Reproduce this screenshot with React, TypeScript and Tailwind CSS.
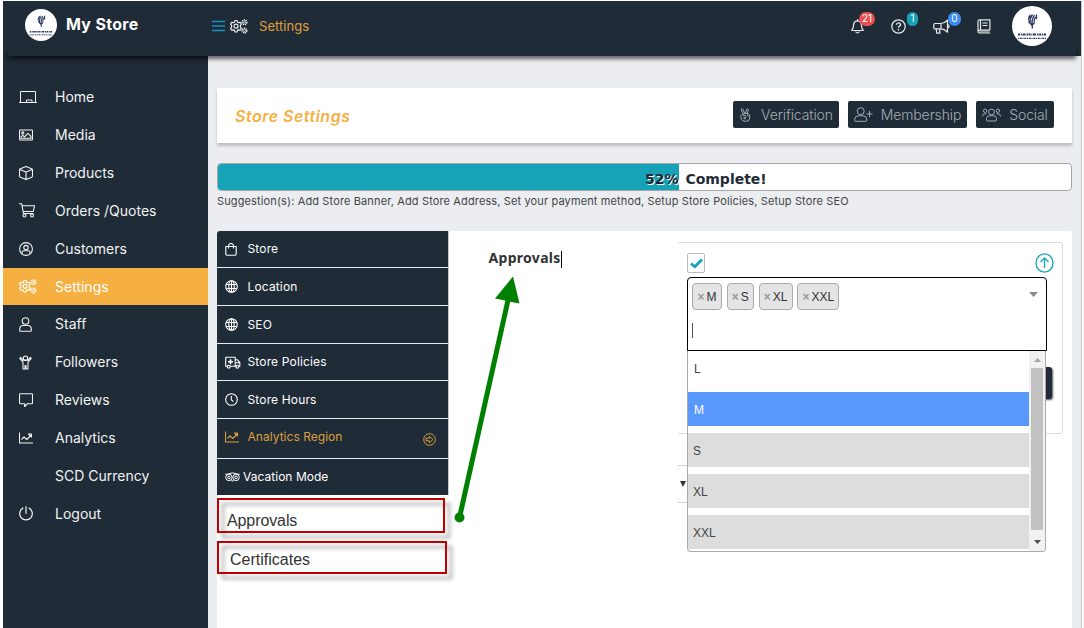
import type { ReactNode } from 'react';

type GlyphProps = { w?: number; h?: number; box?: string; stroke?: number; className?: string; children: ReactNode };

function Glyph({ w = 14, h = 14, box, stroke = 1, className, children }: GlyphProps) {
  return (
    <svg
      width={w}
      height={h}
      viewBox={box ?? `0 0 ${w} ${h}`}
      fill="none"
      stroke="currentColor"
      strokeWidth={stroke}
      strokeLinejoin="round"
      className={`shrink-0 ${className ?? ''}`}
    >
      {children}
    </svg>
  );
}

const Home = () => (
  <Glyph w={18} h={14}>
    <path d="M1.500 12.500V1.500h15v11M0 12.500h18M7.500 12.500v-2.500h5.500v2.500" />
  </Glyph>
);

const Media = () => (
  <Glyph w={14} h={12} stroke={1.100}>
    <rect x="0.5" y="1" width="13" height="10" rx="0.6" />
    <circle cx="3.8" cy="4" r="1.1" />
    <path d="M2 9.2V7.8l1.7-1.5 1.8 1.5L8.8 4.3 12 7.3v1.9z" />
  </Glyph>
);

const Products = () => (
  <Glyph stroke={1.100}>
    <path d="M7 .6l5.6 2.2q.9.4.9 1.2v6q0 .8-.9 1.2L7 13.4l-5.6-2.2Q.5 10.800.5 10V4q0-.8.9-1.2zM.8 3.500L7 6l6.200-2.500M7 6v7" />
  </Glyph>
);

const Cart = () => (
  <Glyph w={16} h={15} stroke={1.100}>
    <path d="M0 .8h2.700l1.800 9.700h10M3.200 2.700h12.300l-1.200 5.800H4.200" />
    <circle cx="5.500" cy="12.500" r="1.500" />
    <circle cx="13" cy="12.500" r="1.500" />
  </Glyph>
);

const Customers = () => (
  <Glyph stroke={1.100}>
    <circle cx="7" cy="7" r="6.400" />
    <circle cx="7" cy="5.600" r="2.200" />
    <path d="M3 11.800V10.500q0-1.700 1.700-1.700h4.600q1.700 0 1.700 1.700v1.300" />
  </Glyph>
);

function Cogs({ className }: { className?: string }) {
  return (
    <Glyph w={18} h={15} stroke={1.200} className={className}>
      <path d="M5 1.500h2l.5 1.600 1.200.6 1.700-.4 1 1.800-1 1.300v1.700l1 1.300-1 1.800-1.700-.4-1.200.6-.5 1.600H5l-.5-1.600-1.200-.6-1.700.4-1-1.800 1-1.300V6.400l-1-1.300 1-1.800 1.700.4 1.200-.6z" />
      <circle cx="6" cy="7.200" r="2" />
      <circle cx="14.500" cy="3.300" r="2.300" strokeDasharray="1.200 .6" strokeWidth="1.500" />
      <circle cx="14.500" cy="3.300" r="1" strokeWidth=".8" />
      <circle cx="14.500" cy="11.600" r="2.300" strokeDasharray="1.200 .6" strokeWidth="1.500" />
      <circle cx="14.500" cy="11.600" r="1" strokeWidth=".8" />
    </Glyph>
  );
}

const Staff = () => (
  <Glyph w={13} h={15} stroke={1.100}>
    <circle cx="6.500" cy="4" r="3.300" />
    <path d="M4.300 8.500h4.400q3.600 0 3.600 3.500v1.400q0 .8-.8.8h-10q-.8 0-.8-.8V12q0-3.500 3.600-3.500z" />
  </Glyph>
);

const Followers = () => (
  <Glyph w={13} h={15} stroke={1.100}>
    <circle cx="6.500" cy="3.200" r="2.200" />
    <path d="M4 5.300L1.800 2.400l-1.100 1L4 7.200V14h2v-3.500h1V14h2V7.200l3.300-3.800-1.100-1L9 5.300z" />
  </Glyph>
);

const Reviews = () => (
  <Glyph w={14} h={15} stroke={1.100}>
    <path d="M1.300.8h11.400q.8 0 .8.800v8.300q0 .8-.8.800H8.500l-2.800 2.800v-2.800H1.300q-.8 0-.8-.8V1.600q0-.8.8-.8z" />
  </Glyph>
);

const Chart = () => (
  <Glyph w={14} h={12} stroke={1.100}>
    <path d="M.5.500v10.500H14M2.500 7.500l2.500-2.500 2.800 2.500 4-4" />
    <path d="M9.500 2h3v3z" />
  </Glyph>
);

const Power = () => (
  <Glyph w={14} h={15} stroke={1.200}>
    <path d="M7 .3v7.500M4.300 1.900a6.300 6.300 0 1 0 5.400 0" />
  </Glyph>
);

const Bag = () => (
  <Glyph w={12} h={13} stroke={1.100}>
    <path d="M.8 3.500h10.400v7.300q0 1.500-1.500 1.500H2.300q-1.500 0-1.500-1.500zM3.500 5.500V3a2.500 2.500 0 0 1 5 0v2.500" />
  </Glyph>
);

const Globe = () => (
  <Glyph w={13} h={13} stroke={1.100}>
    <circle cx="6.500" cy="6.500" r="5.800" />
    <ellipse cx="6.500" cy="6.500" rx="2.700" ry="5.800" />
    <path d="M1.200 4.500h10.600M1.200 8.500h10.600M6.500.7v11.600" />
  </Glyph>
);

const Truck = () => (
  <Glyph w={16} h={13} stroke={1.100}>
    <path d="M2 10.300H.7V1.200h9.500v9.100H5M10.200 3.800h2.300l2.300 2.800v3.700h-1M11.500 10.300H5M11 6.800h3.500" />
    <path d="M5.500 3.200v5M3 5.700h5" strokeWidth="1.600" />
    <circle cx="3.700" cy="10.700" r="1.400" />
    <circle cx="12.300" cy="10.700" r="1.400" />
  </Glyph>
);

const Clock = () => (
  <Glyph w={13} h={13} stroke={1.100}>
    <circle cx="6.500" cy="6.500" r="5.800" />
    <path d="M6.300 3v3.800l2 1.700" />
  </Glyph>
);

const Owl = () => (
  <Glyph w={15} h={10}>
    <circle cx="3.900" cy="5.400" r="3.200" />
    <circle cx="11.100" cy="5.400" r="3.200" />
    <circle cx="3.900" cy="5.400" r="1.300" />
    <circle cx="11.100" cy="5.400" r="1.300" />
    <path d="M.3 2.200h2Q7.500-.5 12.700 2.200h2M6.500 8l1 1.300L8.500 8" />
  </Glyph>
);

const Peace = () => (
  <Glyph w={12} h={14}>
    <path d="M4.200 5.800L2.300 2q-.2-1 .5-1.200.7-.2 1 .5l2 4.200M6.500 5.200l1.200-4q.4-.7 1.100-.4.700.3.500 1.100l-1.100 4" />
    <path d="M2.500 6.800l3.800-1.500 3.200.6q1.200.6 1.200 2v2.200q0 3.300-4 3.300-3.200 0-4.200-2.200L1.700 8.300q-.1-1 .8-1.500z" />
    <path d="M4 7.500q3-.8 3 .8T4.500 9.800l2.700 1.500M8.900 6.200v2.200" />
  </Glyph>
);

const Member = () => (
  <Glyph w={19} h={15}>
    <circle cx="6.700" cy="4.200" r="3.500" />
    <path d="M4.500 8.800h4.400q3.800 0 3.800 3.400v1.200q0 .9-.9.900H1.600q-.9 0-.9-.9v-1.200q0-3.400 3.800-3.400zM15.500 4v6M12.500 7h6" />
  </Glyph>
);

const People = () => (
  <Glyph w={19} h={14}>
    <circle cx="9.500" cy="4" r="2.900" />
    <circle cx="3.100" cy="2.800" r="1.700" />
    <circle cx="15.900" cy="2.800" r="1.700" />
    <path d="M7.500 7.800h4q3 0 3 2.700v1.700q0 .8-.8.8H5.300q-.8 0-.8-.8v-1.700q0-2.700 3-2.700zM.6 8.500V7.800q0-1.800 1.800-1.800h2.100M18.400 8.500V7.800q0-1.800-1.800-1.800h-2.100" />
  </Glyph>
);

const Bell = () => (
  <Glyph w={13} h={15} stroke={1.2}>
    <path d="M6.500.3v1.500M6.500 1.800q3.800.3 3.900 4 0 3 1.200 4.300.6.600.6 1.400H.8q0-.8.600-1.400 1.200-1.300 1.200-4.300.1-3.700 3.900-4zM4.700 12.500q.3 1.500 1.800 1.500t1.800-1.500" />
  </Glyph>
);

const Help = () => (
  <Glyph w={15} h={15} stroke={1.2}>
    <circle cx="7.500" cy="7.500" r="6.700" />
    <path d="M5.400 5.800q.2-1.900 2.100-1.900t2.100 1.700q0 1-1.100 1.600-1 .5-1 1.500M7.500 10v1.600" strokeWidth="1.400" />
  </Glyph>
);

const Horn = () => (
  <Glyph w={18} h={15} stroke={1.200}>
    <path d="M8 4.500H2q-1.200 0-1.200 1.200v3q0 1.200 1.200 1.200h6q3 0 6.500 3.300V1.200Q11 4.500 8 4.500v5.400M3.200 9.900l.6 4.200h3.200L6.500 9.900M14.500 5.500q1.700.2 1.700 1.700t-1.700 1.700" />
  </Glyph>
);

const Book = () => (
  <Glyph w={14} h={15} stroke={1.200}>
    <path d="M12.900 11.200V.8H2.500Q1 .8 1 2.500v9.800Q1 14 2.700 14h10.500M12.900 11.200H2.700Q1 11.200 1 12.600M3.500.8v10.400M5.500 4h5M5.500 6.500h5" />
    <path d="M2.500 12.700h10" strokeWidth="2" opacity=".5" />
  </Glyph>
);

// Round shop logo: feather mark over a two line name plate
function Logo({ size }: { size: number }) {
  return (
    <svg width={size} height={size} viewBox="0 0 40 40" className="shrink-0">
      <circle cx="20" cy="20" r="20" fill="#fff" />
      <g fill="none" stroke="#26355c" strokeWidth="1.300">
        <path d="M16.500 14.500q-.5-3 1.800-5.500M18 17q-.5-4.500 2.500-8.500M20 18.500q-.5-5 2.500-9.500M22.300 16.500q-.5-3 1.200-5.500M17 10.500l2 1.500M16.500 15.500l3.500 3.800 2.500-2.500M20.300 19v3.500M24.500 8.500v4.500" />
        <path d="M6 28.500h28" strokeDasharray="2 .8 1 .7 3 1 1.500 .6" strokeWidth="1.900" />
        <path d="M6 32.300h28" strokeDasharray="1 .8 2 .7" strokeWidth="1.200" />
      </g>
    </svg>
  );
}

const navItems = [
  { label: 'Home', icon: <Home /> },
  { label: 'Media', icon: <Media /> },
  { label: 'Products', icon: <Products /> },
  { label: 'Orders /Quotes', icon: <Cart /> },
  { label: 'Customers', icon: <Customers /> },
  { label: 'Settings', icon: <Cogs />, active: true },
  { label: 'Staff', icon: <Staff /> },
  { label: 'Followers', icon: <Followers /> },
  { label: 'Reviews', icon: <Reviews /> },
  { label: 'Analytics', icon: <Chart /> },
  { label: 'SCD Currency', icon: null },
  { label: 'Logout', icon: <Power /> },
];

const tabs = [
  { label: 'Store', icon: <Bag />, height: 'h-[37px]' },
  { label: 'Location', icon: <Globe />, height: 'h-[38px]' },
  { label: 'SEO', icon: <Globe />, height: 'h-[38px]' },
  { label: 'Store Policies', icon: <Truck />, height: 'h-[37px]' },
  { label: 'Store Hours', icon: <Clock />, height: 'h-[38px]' },
  { label: 'Analytics Region', icon: <Chart />, height: 'h-[40px]', active: true },
  { label: 'Vacation Mode', icon: <Owl />, height: 'h-[36px]', tight: true },
];

const actions = [
  { label: 'Verification', icon: <Peace />, width: 'w-[106px]', gap: 'gap-[10px]' },
  { label: 'Membership', icon: <Member />, width: 'w-[119px]', gap: 'gap-[8px]' },
  { label: 'Social', icon: <People />, width: 'w-[78px]', gap: 'gap-[8px]' },
];

const tags = [
  { label: 'M', width: 'w-[30px]' },
  { label: 'S', width: 'w-[27px]' },
  { label: 'XL', width: 'w-[34px]' },
  { label: 'XXL', width: 'w-[42px]' },
];

const options = [
  { label: 'L', style: 'bg-white text-[#444] pl-[6px]' },
  { label: 'M', style: 'bg-[#5897fb] text-white pl-[6px]' },
  { label: 'S', style: 'bg-[#ddd] text-[#444] pl-[5px]' },
  { label: 'XL', style: 'bg-[#ddd] text-[#444] pl-[5px]' },
  { label: 'XXL', style: 'bg-[#ddd] text-[#444] pl-[5px]' },
];

function Header() {
  return (
    <header className="relative z-10 flex h-[55px] shrink-0 bg-[#1f2b36] text-[#e8eaec]">
      <div className="flex h-[47px] w-[209px] items-center pl-[22px]">
        <Logo size={32} />
        <span className="ml-[9px] pb-px text-[16px] font-bold tracking-[0.3px] text-white">My Store</span>
      </div>
      <div className="flex h-[50px] items-center">
        <Glyph w={13} h={12} stroke={1.500} className="text-[#1692c8]">
          <path d="M0 1.500h13M0 6h13M0 10.500h13" />
        </Glyph>
        <Cogs className="ml-[5px]" />
        <span className="ml-[11px] mt-[2px] text-[13px] tracking-[0.05px] text-[#e0a03c]">Settings</span>
      </div>
      <div className="ml-auto mr-[29px] flex h-[50px] items-center">
        <div className="relative mr-[27px]">
          <Bell />
          <span className="absolute -top-[7px] left-[8px] flex h-[14px] w-4 items-center justify-center rounded-full bg-[#ea4f51] text-[10px] text-white">21</span>
        </div>
        <div className="relative mr-[27px]">
          <Help />
          <span className="absolute -top-[7px] left-[16px] flex h-[14px] w-[11px] items-center justify-center rounded-full bg-[#18a2b8] text-[10px] text-white">1</span>
        </div>
        <div className="relative mr-[26px]">
          <Horn />
          <span className="absolute -top-[7px] left-[15px] flex h-[14px] w-[13px] items-center justify-center rounded-full bg-[#3b8df0] text-[10px] text-white">0</span>
        </div>
        <Book />
        <span className="ml-[21px]"><Logo size={40} /></span>
      </div>
      <div className="absolute inset-x-[5px] bottom-0 -z-10 h-2 shadow-[0_3px_4px_rgba(0,0,0,0.6)]" />
    </header>
  );
}

function Sidebar() {
  return (
    <nav className="w-[205px] shrink-0 bg-[#1f2b36] pt-[22.500px]">
      {navItems.map(({ label, icon, active }) => (
        <a
          key={label}
          className={`flex h-[37.830px] items-center text-[14px] ${active ? 'bg-[#f6b042] text-white' : 'text-[#f2f3f4]'}`}
        >
          <span className="flex w-[52px] pl-4">{icon}</span>
          <span className="pb-px">{label}</span>
        </a>
      ))}
    </nav>
  );
}

function Tabs() {
  return (
    <div className="h-[264px] w-[232px] overflow-hidden rounded-tl-[3px] border-r border-[#ccc] bg-[#1f2b36]">
      {tabs.map(({ label, icon, height, active, tight }) => (
        <div
          key={label}
          className={`flex items-center border-b border-[#e9ecef] pl-2 pr-3 text-[12px] last:border-b-0 ${height} ${active ? 'pb-[3px] text-[#dc9e3c]' : 'text-white'}`}
        >
          <span className={tight ? 'w-[18px]' : 'w-[22.500px]'}>{icon}</span>
          <span className={active || tight ? 'tracking-[0.03px]' : 'tracking-[0.150px]'}>{label}</span>
          {active && (
            <Glyph w={13} h={13} className="ml-auto mt-[4px]">
              <circle cx="6.500" cy="6.500" r="5.800" />
              <path d="M3 5.200h3.300V3.300l3.700 3.200-3.700 3.200V7.800H3z" />
            </Glyph>
          )}
        </div>
      ))}
    </div>
  );
}

function SizeSelect() {
  return (
    <div className="relative ml-[9px] w-[360px] font-['Liberation_Sans',sans-serif] text-[12px] text-[#333]">
      <div className="flex h-[74px] rounded-t-[4px] border border-black bg-white">
        <div>
          <div className="flex gap-[4.800px] pl-1 pt-[5px]">
            {tags.map(({ label, width }) => (
              <span key={label} className={`flex h-[27px] items-center justify-center gap-[2px] rounded-[4px] border border-[#aaa] bg-[#e4e4e4] ${width}`}>
                <b className="text-[12px] text-[#999]">×</b>
                {label}
              </span>
            ))}
          </div>
          <div className="ml-1 mt-[13px] h-[15px] w-px bg-[#555]" />
        </div>
        <svg width="9" height="5" className="ml-auto mr-[8px] mt-[14px]">
          <path d="M0 0h9L4.500 5z" fill="#888" />
        </svg>
      </div>
      <div className="absolute left-0 top-[74px] flex h-[201px] w-[359px] overflow-hidden rounded-b-[4px] border border-t-0 border-[#aaa] bg-white">
        <div className="flex grow flex-col gap-[7px]">
          {options.map(({ label, style }) => (
            <div key={label} className={`flex h-[34px] shrink-0 items-center pt-[2px] ${style}`}>
              {label}
            </div>
          ))}
        </div>
        <div className="flex w-4 flex-col items-center bg-[#f1f1f1]">
          <svg width="7" height="4" className="mt-[7px]">
            <path d="M0 4h7L3.500 0z" fill="#a3a3a3" />
          </svg>
          <div className="mt-[6px] h-[162px] w-3 bg-[#c1c1c1]" />
          <svg width="7" height="4" className="mt-[10px]">
            <path d="M0 0h7L3.500 4z" fill="#505050" />
          </svg>
        </div>
      </div>
    </div>
  );
}

function AnalyticsRegion() {
  return (
    <div className="ml-[229px] mt-[11px] w-[385px]">
      <div className="relative h-[192px] rounded-r-[3px] border border-l-0 border-[#ddd]">
        <div className="flex h-[35px] items-center justify-between pl-[9px] pr-2 pt-[5px]">
          <span className="flex h-5 w-[18px] items-center justify-center rounded-[2px] border border-[#bbb]">
            <Glyph w={13} h={11} stroke={2.800} className="text-[#18a2b8]">
              <path d="M1 5.500l3.800 3.300L12 1.500" />
            </Glyph>
          </span>
          <Glyph w={19} h={20} stroke={1.300} className="text-[#18a2b8]">
            <ellipse cx="9.500" cy="10" rx="8.500" ry="9.200" />
            <path d="M9.500 15V5M5.500 9l4-4 4 4" />
          </Glyph>
        </div>
        <span className="absolute left-[360px] top-[124px] h-[32px] w-[14px] rounded-r-[3px] bg-[#1f2b36] shadow-[1px_1px_2px_#555]" />
        <div className="-mt-px"><SizeSelect /></div>
      </div>
      <div className="mt-[31px] flex h-[38px] w-[9px] items-center border-y border-[#ccc]">
        <svg width="6" height="6" className="ml-[2px]">
          <path d="M0 0h6L3 6z" fill="#333" />
        </svg>
      </div>
    </div>
  );
}

// Callouts drawn on top of the page
function Annotations() {
  return (
    <div className="pointer-events-none absolute inset-0 z-20 font-['Liberation_Sans',sans-serif] text-[#333]">
      <div className="absolute left-[217px] top-[498px] h-[35px] w-[228px] border-2 border-[#c00000] drop-shadow-[5px_5px_2px_rgba(0,0,0,0.4)]" />
      <span className="absolute left-[227px] top-[511px] text-[16px] leading-[20px] tracking-[-0.1px]">Approvals</span>
      <div className="absolute left-[217px] top-[541px] h-[33px] w-[230px] border-2 border-[#c00000] drop-shadow-[5px_5px_2px_rgba(0,0,0,0.4)]" />
      <span className="absolute left-[230px] top-[550px] text-[16px] leading-[20px]">Certificates</span>
      <span className="absolute left-[488.500px] top-[249px] font-['Noto_Sans',sans-serif] text-[14px] font-bold leading-[18px] tracking-[0.3px]">Approvals</span>
      <span className="absolute left-[561px] top-[251px] h-[17px] w-px bg-black" />
      <svg className="absolute left-[450px] top-[270px]" width="80" height="260">
        <path d="M9.500 247.500L58.500 28" stroke="#008000" strokeWidth="5" />
        <circle cx="9.500" cy="247.500" r="5" fill="#008000" />
        <path d="M63 6.500L45 28.500l24.500 5z" fill="#008000" />
      </svg>
    </div>
  );
}

export default function App() {
  return (
    <div className="relative flex h-[628px] w-[1084px] flex-col overflow-hidden bg-white pl-[3px] pr-[2px] pt-px font-[Inter,sans-serif]">
      <div className="flex grow flex-col border-r border-[#c8c9cc]">
        <Header />
        <div className="flex grow">
          <Sidebar />
          <main className="flex grow flex-col bg-[#ebedf1] pl-[9px] pr-[9px] pt-8">
            <section className="flex h-[55px] items-center justify-between bg-white pl-[18px] pr-[18px] shadow-[0_3px_3px_rgba(0,0,0,0.2)]">
              <h1 className="text-[16px] font-semibold italic tracking-[0.5px] text-[#f6b042]">Store Settings</h1>
              <div className="flex gap-[9px] pb-[2px]">
                {actions.map(({ label, icon, width, gap }) => (
                  <button key={label} className={`flex h-[27px] items-center justify-center rounded-[2px] bg-[#1f2b36] text-[14px] font-light tracking-[-0.1px] text-[#a4adb4] ${width} ${gap}`}>
                    {icon}
                    {label}
                  </button>
                ))}
              </div>
            </section>
            <div className="relative mt-5 h-7 overflow-hidden rounded-[4px] border border-[#a4a6a9] bg-white">
              <div className="h-full w-[461px] bg-[#18a2b8]" />
              <b className="absolute left-[427px] top-[5px] whitespace-nowrap font-['DejaVu_Sans',sans-serif] text-[14px] leading-5 text-[#1f2b36] [text-shadow:1px_1px_0_#fff] [word-spacing:2px]">52% Complete!</b>
            </div>
            <p className="h-10 whitespace-nowrap pt-[2px] text-[11px] leading-4 tracking-[0.130px] text-[#444]">
              Suggestion(s): Add Store Banner, Add Store Address, Set your payment method, Setup Store Policies, Setup Store SEO
            </p>
            <section className="flex grow items-start rounded-t-[3px] bg-white">
              <Tabs />
              <AnalyticsRegion />
            </section>
          </main>
        </div>
      </div>
      <Annotations />
    </div>
  );
}
